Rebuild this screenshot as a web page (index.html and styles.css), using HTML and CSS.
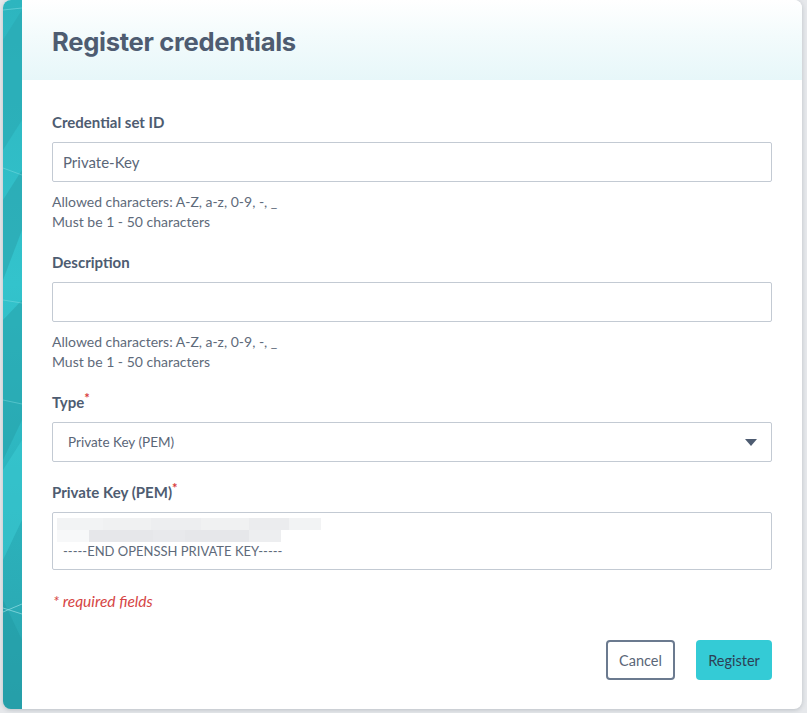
FILE: index.html
```html
<!DOCTYPE html>
<html>
<head>
  <meta charset="UTF-8">
  <title>Register credentials</title>
  <link rel="stylesheet" href="styles.css">
</head>
<body>
  <div class="modal">
    <div class="modal-stripe">
      <svg class="stripe-art" viewBox="0 0 19 709" preserveAspectRatio="none">
        <polygon points="0,40 19,10 19,120 0,150" fill="#2aa9b3" opacity="0.6"/>
        <polygon points="0,200 19,170 19,230 0,280" fill="#279ea8" opacity="0.5"/>
        <polygon points="0,320 19,300 19,420 0,460" fill="#27a0aa" opacity="0.55"/>
        <polygon points="0,470 19,440 19,520 0,560" fill="#3ccdd5" opacity="0.5"/>
        <polygon points="0,600 19,640 19,709 0,709" fill="#229aa3" opacity="0.5"/>
        <path d="M0 10 L19 8" stroke="#8fe3e8" stroke-width="0.8" opacity="0.6"/>
        <path d="M0 168 L19 175" stroke="#8fe3e8" stroke-width="0.8" opacity="0.5"/>
        <path d="M0 300 L19 303" stroke="#8fe3e8" stroke-width="0.8" opacity="0.5"/>
        <path d="M0 400 L19 404" stroke="#8fe3e8" stroke-width="0.8" opacity="0.5"/>
        <path d="M0 608 L19 614 M0 612 L19 604" stroke="#b3eef1" stroke-width="0.8" opacity="0.7"/>
      </svg>
    </div>
    <div class="modal-main">
      <div class="modal-header">
        <h1>Register credentials</h1>
      </div>
      <form class="modal-body">
        <div class="field">
          <label class="field-label">Credential set ID</label>
          <div class="input">Private-Key</div>
          <div class="hint">Allowed characters: A-Z, a-z, 0-9, -, _<br>Must be 1 - 50 characters</div>
        </div>
        <div class="field">
          <label class="field-label">Description</label>
          <div class="input"></div>
          <div class="hint">Allowed characters: A-Z, a-z, 0-9, -, _<br>Must be 1 - 50 characters</div>
        </div>
        <div class="field">
          <label class="field-label">Type<span class="req">*</span></label>
          <div class="input select">
            <span>Private Key (PEM)</span>
            <span class="caret"></span>
          </div>
        </div>
        <div class="field">
          <label class="field-label">Private Key (PEM)<span class="req">*</span></label>
          <div class="input textarea">
            <div class="blur-row">
              <span style="width:46px;opacity:.5"></span><span style="width:48px;opacity:.6"></span><span style="width:50px;opacity:.7"></span><span style="width:48px;opacity:.6"></span><span style="width:40px;opacity:.8"></span><span style="width:32px;opacity:.5"></span>
            </div>
            <div class="blur-row">
              <span style="width:32px;opacity:.3"></span><span style="width:64px;opacity:1"></span><span style="width:32px;opacity:.9"></span><span style="width:64px;opacity:1"></span><span style="width:32px;opacity:.7"></span>
            </div>
            <div class="key-end">-----END OPENSSH PRIVATE KEY-----</div>
          </div>
        </div>
        <p class="required-note">* required fields</p>
        <div class="actions">
          <button type="button" class="btn btn-secondary">Cancel</button>
          <button type="button" class="btn btn-primary">Register</button>
        </div>
      </form>
    </div>
  </div>
</body>
</html>
```

FILE: styles.css
```css
* {
  margin: 0;
  padding: 0;
  box-sizing: border-box;
}

html, body {
  height: 100%;
  overflow: hidden;
}

body {
  background: #e6e8eb;
  font-family: Lato, 'Open Sans', sans-serif;
  color: #4d5b70;
}

.modal {
  display: flex;
  width: 799px;
  height: 709px;
  margin-left: 3px;
  background: #ffffff;
  border-radius: 8px;
  overflow: hidden;
  box-shadow: 0 1px 4px rgba(60, 70, 85, 0.25);
}

.modal-stripe {
  width: 19px;
  flex-shrink: 0;
  background: linear-gradient(180deg, #2db5bf 0%, #33c3cc 40%, #2cb3bd 70%, #2aa4ae 100%);
}

.stripe-art {
  display: block;
  width: 19px;
  height: 100%;
}

.modal-main {
  flex: 1;
  display: flex;
  flex-direction: column;
}

.modal-header {
  height: 80px;
  padding: 0 30px;
  display: flex;
  align-items: center;
  background: linear-gradient(180deg, #ffffff 0%, #f3fbfc 45%, #e7f7f9 100%);
}

.modal-header h1 {
  font-family: Inter, 'Open Sans', sans-serif;
  font-size: 25.6px;
  font-weight: 700;
  color: #4e5c71;
  letter-spacing: -0.3px;
  margin-top: 3px;
}

.modal-body {
  flex: 1;
  padding: 32px 30px 29px;
  display: flex;
  flex-direction: column;
}

.field {
  display: flex;
  flex-direction: column;
  margin-bottom: 20px;
}

.field-label {
  font-size: 15px;
  font-weight: 700;
  line-height: 20px;
  height: 20px;
  color: #4e5c71;
  margin-bottom: 10px;
}

.req {
  color: #d83b3b;
  font-size: 13px;
  line-height: 0;
  position: relative;
  top: -5px;
}

.input {
  height: 40px;
  border: 1px solid #c3cad3;
  border-radius: 2px;
  padding: 0 10px;
  display: flex;
  align-items: center;
  font-size: 15px;
  color: #5a6677;
}

.select {
  justify-content: space-between;
  padding: 0 14px 0 15px;
  font-size: 13.5px;
}

.caret {
  width: 0;
  height: 0;
  border-left: 6px solid transparent;
  border-right: 6px solid transparent;
  border-top: 7px solid #4e5c71;
}

.textarea {
  height: 58px;
  flex-direction: column;
  align-items: flex-start;
  justify-content: flex-start;
  padding: 5px 10px 0 4px;
}

.blur-row {
  display: flex;
  height: 12px;
}

.blur-row span {
  height: 12px;
  background: #e6e7ea;
}

.key-end {
  font-size: 13px;
  line-height: 20px;
  padding-left: 6px;
  margin-top: -1px;
  color: #5e6a7a;
}

.hint {
  margin-top: 10px;
  font-size: 14px;
  line-height: 20px;
  color: #5e6a7a;
}

.required-note {
  margin-top: 1px;
  font-size: 15.5px;
  line-height: 20px;
  font-style: italic;
  color: #d64545;
  padding-left: 1px;
}

.actions {
  margin-top: auto;
  display: flex;
  justify-content: flex-end;
  gap: 21px;
}

.btn {
  height: 40px;
  border-radius: 4px;
  font-family: Lato, 'Open Sans', sans-serif;
  font-size: 14.5px;
  cursor: pointer;
}

.btn-secondary {
  width: 69px;
  background: #ffffff;
  border: 2px solid #6b7a8f;
  color: #5a6677;
}

.btn-primary {
  width: 76px;
  background: #34cbd6;
  border: none;
  color: #2d3f55;
}
```
